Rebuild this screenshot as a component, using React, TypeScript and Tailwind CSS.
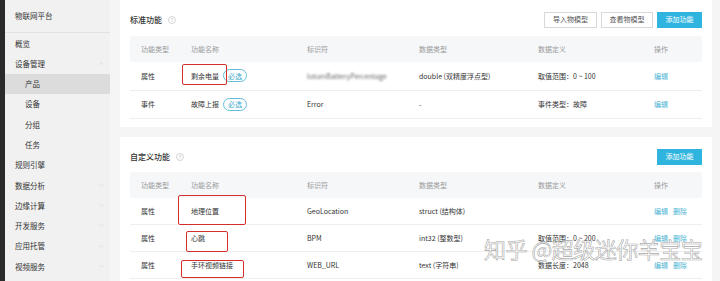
import React from 'react';
import { ChevronDown, ChevronUp } from 'lucide-react';

type Row = {
  kind: string;
  name: string;
  required?: boolean;
  id: string;
  blurId?: boolean;
  dataType: string;
  def: string;
  ops: string[];
};

const stdRows: Row[] = [
  { kind: '属性', name: '剩余电量', required: true, id: 'lotomBatteryPercentage', blurId: true, dataType: 'double (双精度浮点型)', def: '取值范围：0 ~ 100', ops: ['编辑'] },
  { kind: '事件', name: '故障上报', required: true, id: 'Error', dataType: '-', def: '事件类型：故障', ops: ['编辑'] },
];

const customRows: Row[] = [
  { kind: '属性', name: '地理位置', id: 'GeoLocation', dataType: 'struct (结构体)', def: '', ops: ['编辑', '删除'] },
  { kind: '属性', name: '心跳', id: 'BPM', dataType: 'int32 (整数型)', def: '取值范围：0 ~ 200', ops: ['编辑', '删除'] },
  { kind: '属性', name: '手环视频链接', id: 'WEB_URL', dataType: 'text (字符串)', def: '数据长度：2048', ops: ['编辑', '删除'] },
];

const menu = [
  { label: '概览' },
  { label: '设备管理', open: true },
  { label: '产品', child: true, active: true },
  { label: '设备', child: true },
  { label: '分组', child: true },
  { label: '任务', child: true },
  { label: '规则引擎' },
  { label: '数据分析', more: true },
  { label: '边缘计算', more: true },
  { label: '开发服务', more: true },
  { label: '应用托管', more: true },
  { label: '视频服务', more: true },
];

const cols = 'grid grid-cols-[50px_116px_112px_119px_116px_1fr] items-center pl-[11px]';

const Help = () => (
  <span className="ml-[6px] w-[8px] h-[8px] rounded-full border border-[#d6d6d6] text-[#c0c0c0] text-[5px] leading-none flex items-center justify-center">?</span>
);

const TableHead = () => (
  <div className={`${cols} h-[26px] bg-[#f6f7f9] text-[#999]`}>
    <span>功能类型</span>
    <span>功能名称</span>
    <span>标识符</span>
    <span>数据类型</span>
    <span>数据定义</span>
    <span>操作</span>
  </div>
);

const TableRow = ({ row, h }: { row: Row; h: string }) => (
  <div className={`${cols} ${h} border-b border-[#eeeeee] text-[#333]`}>
    <span>{row.kind}</span>
    <span className="flex items-center">
      {row.name}
      {row.required && (
        <span className="ml-[4px] h-[13px] px-[4px] rounded-full border border-[#62bfd9] text-[#3aa8cb] flex items-center">必选</span>
      )}
    </span>
    <span className={row.blurId ? 'blur-[1px] text-[#666] whitespace-nowrap overflow-hidden' : ''}>{row.id}</span>
    <span>{row.dataType}</span>
    <span>{row.def}</span>
    <span className="flex gap-[5px] text-[#48b3d4]">
      {row.ops.map((o) => (
        <span key={o}>{o}</span>
      ))}
    </span>
  </div>
);

export default function App() {
  return (
    <div className="relative flex w-[720px] h-[281px] overflow-hidden text-[7px] font-['Noto_Sans_CJK_SC',sans-serif]">
      <div className="w-[5px] shrink-0 bg-[#2a2a2a]" />

      <aside className="w-[105px] shrink-0 bg-[#f1f1f1] flex flex-col text-[7.5px] text-[#333]">
        <div className="h-[33px] shrink-0 flex items-center pl-[10px] border-b border-[#e2e2e2]">物联网平台</div>
        {menu.map((m) => (
          <div
            key={m.label}
            className={`h-[20.3px] shrink-0 flex items-center justify-between pr-[5px] ${m.child ? 'pl-[20px]' : 'pl-[10px]'} ${m.active ? 'bg-[#dcdcdc]' : ''}`}
          >
            <span>{m.label}</span>
            {m.open && <ChevronUp className="w-[7px] h-[7px] text-[#bbb]" strokeWidth={1.2} />}
            {m.more && <ChevronDown className="w-[7px] h-[7px] text-[#bbb]" strokeWidth={1.2} />}
          </div>
        ))}
      </aside>

      <main className="flex-1 bg-[#f5f5f5] pl-[10px] pr-[8px] flex flex-col">
        <section className="bg-white h-[127px] px-[10px] shrink-0">
          <div className="h-[36px] pt-[3px] flex items-center justify-between">
            <div className="flex items-center text-[8px] font-medium text-[#333]">
              标准功能
              <Help />
            </div>
            <div className="flex items-center gap-[4px]">
              <button className="h-[16px] w-[53px] border border-[#d9d9d9] bg-white text-[#555]">导入物模型</button>
              <button className="h-[16px] w-[52px] border border-[#d9d9d9] bg-white text-[#555]">查看物模型</button>
              <button className="h-[16px] w-[45px] bg-[#2eb4de] text-white">添加功能</button>
            </div>
          </div>
          <TableHead />
          {stdRows.map((r) => (
            <TableRow key={r.name} row={r} h="h-[28.5px]" />
          ))}
        </section>

        <section className="bg-white mt-[10px] px-[10px] flex-1">
          <div className="h-[35px] pt-[4px] flex items-center justify-between">
            <div className="flex items-center text-[8px] font-medium text-[#333]">
              自定义功能
              <Help />
            </div>
            <button className="h-[16px] w-[45px] bg-[#2eb4de] text-white">添加功能</button>
          </div>
          <TableHead />
          {customRows.map((r) => (
            <TableRow key={r.name} row={r} h="h-[27px]" />
          ))}
        </section>
      </main>

      {/* annotation boxes */}
      <div className="absolute left-[182px] top-[64px] w-[45px] h-[21px] border-[1.5px] border-[#d3302c] rounded-[2px]" />
      <div className="absolute left-[178px] top-[195px] w-[68px] h-[30px] border-[1.5px] border-[#d3302c] rounded-[2px]" />
      <div className="absolute left-[186px] top-[231px] w-[42px] h-[21px] border-[1.5px] border-[#d3302c] rounded-[2px]" />
      <div className="absolute left-[181px] top-[260px] w-[63px] h-[18px] border-[1.5px] border-[#d3302c] rounded-[2px]" />

      <div className="absolute left-[484px] top-[237px] text-[22px] leading-none tracking-[-0.5px] text-white/50 [-webkit-text-stroke:0.6px_#aaaaaa] whitespace-nowrap">
        知乎 @超级迷你羊宝宝
      </div>
    </div>
  );
}
